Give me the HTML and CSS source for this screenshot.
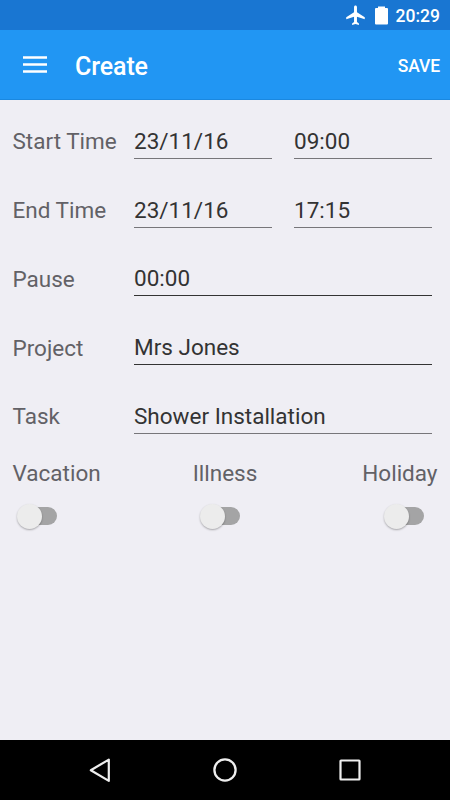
FILE: index.html
```html
<!DOCTYPE html>
<html lang="en">
<head>
    <meta charset="UTF-8">
    <meta name="viewport" content="width=device-width, initial-scale=1.0">
    <title>Create</title>
    <link rel="stylesheet" href="styles.css">
</head>
<body>
    <div class="status-bar">
        <svg class="plane-icon" viewBox="2 1.5 19 20.5" width="19" height="20">
            <path fill="#fff" d="M21 16v-2l-8-5V3.500c0-.83-.67-1.500-1.500-1.500S10 2.670 10 3.500V9l-8 5v2l8-2.500V19l-2 1.500V22l3.500-1 3.500 1v-1.500L13 19v-5.500l8 2.500z"/>
        </svg>
        <svg class="battery-icon" viewBox="0 0 13 19" width="13" height="19">
            <path fill="#fff" d="M3 0.500h7v1.500h2a1 1 0 0 1 1 1v14.500a1 1 0 0 1-1 1H1a1 1 0 0 1-1-1V3a1 1 0 0 1 1-1h2z"/>
        </svg>
        <span class="clock">20:29</span>
    </div>

    <header class="app-bar">
        <div class="menu-icon">
            <svg viewBox="0 0 24 18" width="24" height="18">
                <path fill="#fff" d="M0 0.300h24v2.500H0zM0 7.300h24v2.500H0zM0 14.300h24v2.500H0z"/>
            </svg>
        </div>
        <h1>Create</h1>
        <div class="save-btn">SAVE</div>
    </header>

    <main class="form">
        <div class="form-row">
            <div class="label">Start Time</div>
            <div class="field light">23/11/16</div>
            <div class="field light">09:00</div>
        </div>
        <div class="form-row">
            <div class="label">End Time</div>
            <div class="field light">23/11/16</div>
            <div class="field light">17:15</div>
        </div>
        <div class="form-row">
            <div class="label">Pause</div>
            <div class="field">00:00</div>
        </div>
        <div class="form-row">
            <div class="label">Project</div>
            <div class="field">Mrs Jones</div>
        </div>
        <div class="form-row">
            <div class="label">Task</div>
            <div class="field light">Shower Installation</div>
        </div>

        <div class="switches">
            <div class="switch-group">
                <div class="label">Vacation</div>
                <div class="switch"><div class="thumb"></div></div>
            </div>
            <div class="switch-group center">
                <div class="label">Illness</div>
                <div class="switch"><div class="thumb"></div></div>
            </div>
            <div class="switch-group right">
                <div class="label">Holiday</div>
                <div class="switch"><div class="thumb"></div></div>
            </div>
        </div>
    </main>

    <nav class="nav-bar">
        <svg viewBox="0 0 26 26" width="26" height="26">
            <path fill="none" stroke="#eee" stroke-width="2.200" stroke-linejoin="round" d="M21.800 2.600v21.300L3.800 13.200z"/>
        </svg>
        <svg viewBox="0 0 26 26" width="26" height="26">
            <circle fill="none" stroke="#eee" stroke-width="2.300" cx="13" cy="13" r="10.600"/>
        </svg>
        <svg viewBox="0 0 26 26" width="26" height="26">
            <rect fill="none" stroke="#eee" stroke-width="2.200" x="3.500" y="3.500" width="19" height="19" rx="0.500"/>
        </svg>
    </nav>
</body>
</html>
```

FILE: styles.css
```css
* {
    box-sizing: border-box;
}
body {
    margin: 0;
    height: 800px;
    display: flex;
    flex-direction: column;
    font-family: Roboto, sans-serif;
    background-color: #efeef4;
    overflow: hidden;
}
.status-bar {
    height: 30px;
    padding-right: 10px;
    display: flex;
    align-items: center;
    justify-content: flex-end;
    background-color: #1976d2;
    color: white;
}
.battery-icon {
    margin-left: 10px;
}
.clock {
    margin-left: 8px;
    padding-top: 2px;
    font-size: 17.5px;
    font-weight: 500;
    line-height: 30px;
}
.app-bar {
    height: 70px;
    padding: 0 10px 0 23px;
    display: flex;
    align-items: center;
    background-color: #2196f3;
    border-bottom: 1px solid #1a88e0;
    color: white;
}
.menu-icon {
    height: 18px;
    display: flex;
}
.app-bar h1 {
    margin: 4px 0 0 28px;
    font-size: 25px;
    font-weight: 500;
    letter-spacing: -0.1px;
}
.save-btn {
    margin-top: 2px;
    margin-left: auto;
    font-size: 17.5px;
    font-weight: 500;
    letter-spacing: -0.1px;
}
.form {
    flex: 1;
    padding: 7px 12.5px 0;
    font-size: 22.5px;
}
.form-row {
    height: 68.75px;
    padding-right: 5.5px;
    display: flex;
    align-items: center;
    gap: 22px;
}
.label {
    color: #626166;
    line-height: 30px;
    white-space: nowrap;
}
.form-row .label {
    flex: none;
    width: 99.5px;
}
.field {
    flex: 1;
    height: 35px;
    line-height: 34px;
    color: #333;
    border-bottom: 1px solid #333;
    white-space: nowrap;
}
.field.light {
    border-bottom-color: #77767a;
}
.switches {
    display: flex;
    justify-content: space-between;
    margin-top: 7.5px;
}
.switch-group {
    flex: 1;
    display: flex;
    flex-direction: column;
}
.switch-group.center {
    align-items: center;
}
.switch-group.right {
    align-items: flex-end;
}
.switch {
    width: 36px;
    height: 18px;
    margin: 19px 14px 0 8px;
    display: flex;
    align-items: center;
    border-radius: 9px;
    background-color: #a4a4a5;
}
.thumb {
    width: 25px;
    height: 25px;
    margin-left: -4px;
    border-radius: 50%;
    background-color: #ececec;
    box-shadow: 0 1px 2px rgba(0,0,0,0.3);
}
.nav-bar {
    height: 60px;
    padding: 0 87px;
    display: flex;
    align-items: center;
    justify-content: space-between;
    background-color: black;
}
```
